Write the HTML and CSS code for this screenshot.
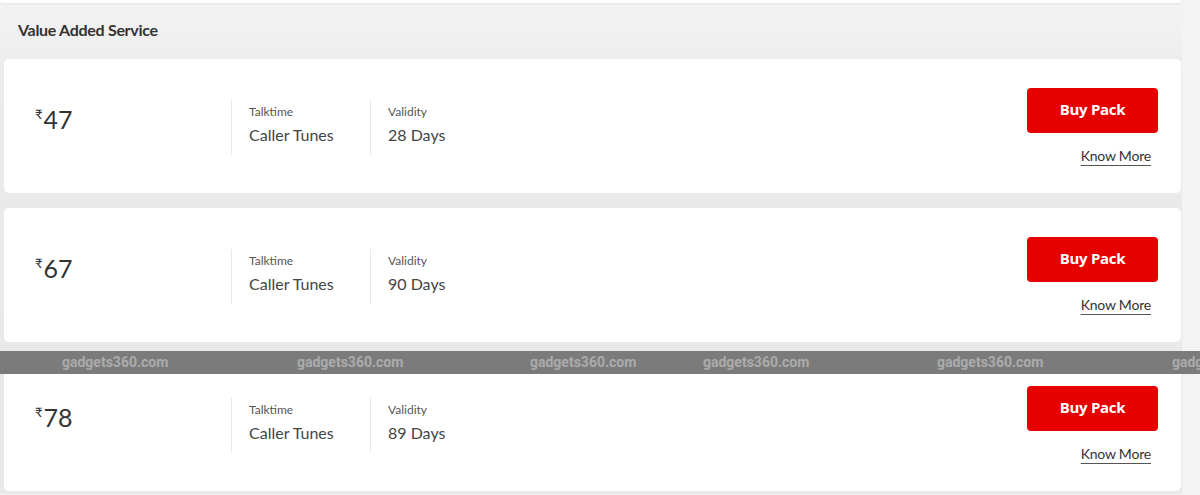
FILE: index.html
```html
<!DOCTYPE html>
<html>
<head>
<meta charset="utf-8">
<link rel="stylesheet" href="styles.css">
</head>
<body>
<div class="page">
  <div class="column">
    <div class="prev-card"></div>
    <h2 class="section-title">Value Added Service</h2>
    <div class="cards">
      <div class="card">
        <div class="price"><span class="rupee">₹</span>47</div>
        <div class="info"><div class="label">Talktime</div><div class="value">Caller Tunes</div></div>
        <div class="info"><div class="label">Validity</div><div class="value">28 Days</div></div>
        <div class="actions"><button class="buy">Buy Pack</button><a class="more">Know More</a></div>
      </div>
      <div class="card">
        <div class="price"><span class="rupee">₹</span>67</div>
        <div class="info"><div class="label">Talktime</div><div class="value">Caller Tunes</div></div>
        <div class="info"><div class="label">Validity</div><div class="value">90 Days</div></div>
        <div class="actions"><button class="buy">Buy Pack</button><a class="more">Know More</a></div>
      </div>
      <div class="card">
        <div class="price"><span class="rupee">₹</span>78</div>
        <div class="info"><div class="label">Talktime</div><div class="value">Caller Tunes</div></div>
        <div class="info"><div class="label">Validity</div><div class="value">89 Days</div></div>
        <div class="actions"><button class="buy">Buy Pack</button><a class="more">Know More</a></div>
      </div>
    </div>
  </div>
  <div class="side"></div>
</div>
<div class="watermark">
  <span class="wm wm1">gadgets360.com</span>
  <span class="wm wm2">gadgets360.com</span>
  <span class="wm wm3">gadgets360.com</span>
  <span class="wm wm4">gadgets360.com</span>
  <span class="wm wm5">gadgets360.com</span>
  <span class="wm wm6">gadgets360.com</span>
</div>
</body>
</html>
```

FILE: styles.css
```css
* { box-sizing: border-box; }
html, body { margin: 0; padding: 0; }
body {
  width: 1200px;
  height: 495px;
  overflow: hidden;
  background: #f2f2f2;
  font-family: Lato, "Open Sans", sans-serif;
  color: #333;
  position: relative;
}
.page { display: flex; }
.column {
  width: 1182px;
  background: linear-gradient(#f3f3f3 0, #efefef 50px, #eaeaea 70px, #e9e9e9 100%);
  padding-bottom: 3px;
}
.side { flex: 1; background: #f3f3f3; }
.prev-card {
  height: 3px;
  margin-right: 1px;
  background: #fff;
  border-radius: 0 0 5px 5px;
  box-shadow: 0 1px 3px rgba(0,0,0,0.08);
}
.section-title {
  margin: 0;
  padding: 17px 0 0 18px;
  height: 56px;
  font-size: 16px;
  font-weight: 700;
  color: #333;
  letter-spacing: -0.3px;
}
.cards {
  display: flex;
  flex-direction: column;
  gap: 15px;
  padding-left: 4px;
  padding-right: 1px;
}
.card {
  height: 134px;
  background: #fff;
  border-radius: 5px;
  display: flex;
  align-items: center;
  padding: 0 23px 0 31px;
}
.price {
  width: 196px;
  align-self: flex-start;
  padding-top: 40px;
  font-size: 25px;
  color: #333;
  line-height: 30px;
}
.rupee {
  font-size: 13px;
  vertical-align: 10px;
  margin-right: 1px;
}
.info {
  width: 139px;
  height: 55px;
  border-left: 1px solid #e8e8e8;
  padding: 4px 0 0 17px;
  margin-top: 2px;
}
.label { font-size: 12px; color: #555; line-height: 16px; }
.value { font-size: 16px; color: #444; line-height: 22px; margin-top: 4px; }
.actions {
  margin-left: auto;
  display: flex;
  flex-direction: column;
  align-items: flex-end;
  gap: 14px;
  padding-bottom: 1px;
}
.buy {
  width: 131px;
  height: 45px;
  border: 0;
  border-radius: 4px;
  background: #e60000;
  color: #fff;
  font-family: "Open Sans", Lato, sans-serif;
  font-weight: 700;
  font-size: 15px;
  letter-spacing: -0.3px;
  padding: 0;
  padding-bottom: 2px;
}
.more {
  font-size: 14px;
  color: #333;
  margin-right: 7px;
  text-decoration: underline;
  text-underline-offset: 4px;
  text-decoration-color: #555;
  letter-spacing: -0.2px;
}
.watermark {
  position: absolute;
  left: 0;
  top: 351px;
  width: 1200px;
  height: 23px;
  background: #7b7b7b;
}
.wm {
  position: absolute;
  top: 3px;
  font-family: Roboto, sans-serif;
  font-weight: 700;
  font-size: 14px;
  color: #ababab;
  line-height: 17px;
}
.wm1 { left: 62px; }
.wm2 { left: 297px; }
.wm3 { left: 530px; }
.wm4 { left: 703px; }
.wm5 { left: 937px; }
.wm6 { left: 1172px; }
```
